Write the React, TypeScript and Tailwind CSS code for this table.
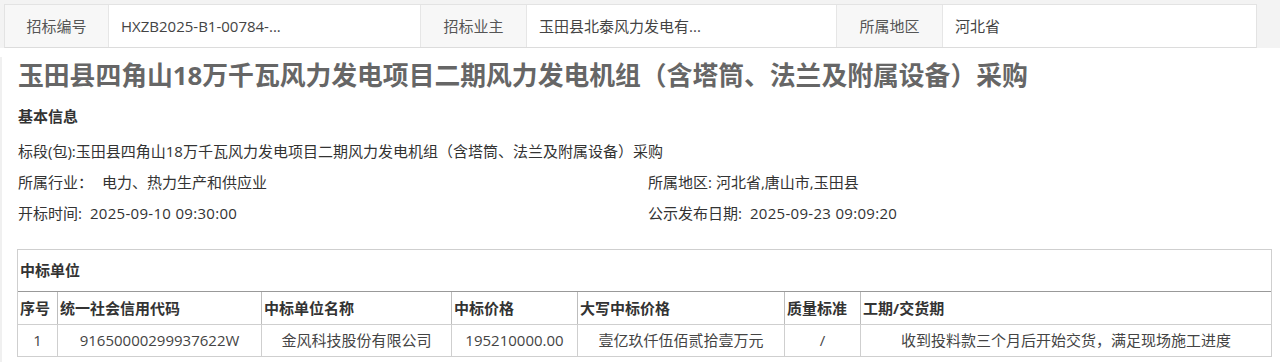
import React from "react";

const font = { fontFamily: '"Open Sans", "Noto Sans CJK SC", sans-serif' };

function TopCell({ label, value, labelW, valueW, last }: { label: string; value: string; labelW: string; valueW: string; last?: boolean }) {
  return (
    <>
      <div className={`${labelW} h-full flex items-center justify-center bg-[#f7f7f7] border-r border-[#e6e6e6] text-[15px] text-[#555]`}>{label}</div>
      <div className={`${valueW} h-full flex items-center pl-[12px] bg-white ${last ? "" : "border-r border-[#e6e6e6]"} text-[15px] text-[#444]`}>{value}</div>
    </>
  );
}

export default function App() {
  const cols = ["w-[40px]", "w-[204px]", "w-[190px]", "w-[126px]", "w-[207px]", "w-[76px]", "flex-1"];
  const heads = ["序号", "统一社会信用代码", "中标单位名称", "中标价格", "大写中标价格", "质量标准", "工期/交货期"];
  const row = ["1", "91650000299937622W", "金风科技股份有限公司", "195210000.00", "壹亿玖仟伍佰贰拾壹万元", "/", "收到投料款三个月后开始交货，满足现场施工进度"];
  return (
    <div className="w-[1280px] h-[362px] bg-white overflow-hidden" style={font}>
      <div className="h-[48px] bg-[#f3f3f3] pl-[4px] pt-[4px]">
        <div className="w-[1253px] h-[44px] flex border border-[#e3e3e3] border-b-[#dcdcdc]">
          <TopCell label="招标编号" value="HXZB2025-B1-00784-..." labelW="w-[104px]" valueW="w-[312px]" />
          <TopCell label="招标业主" value="玉田县北泰风力发电有..." labelW="w-[106px]" valueW="w-[310px]" />
          <TopCell label="所属地区" value="河北省" labelW="w-[106px]" valueW="flex-1" last />
        </div>
      </div>
      <div className="pl-[18px] pr-[8px] border-l-2 border-[#f0f0f0] h-[314px]">
        <div className="mt-[9px] h-[36px] leading-[36px] text-[25.8px] font-bold text-[#666] whitespace-nowrap -ml-[2px]">
          玉田县四角山18万千瓦风力发电项目二期风力发电机组（含塔筒、法兰及附属设备）采购
        </div>
        <div className="mt-[13px] h-[20px] leading-[20px] text-[15px] font-bold text-[#333] -ml-[2px]">基本信息</div>
        <div className="mt-[10px] text-[15px] text-[#333] leading-[31px] -ml-[2px]">
          <div className="h-[31px] whitespace-nowrap">标段(包):玉田县四角山18万千瓦风力发电项目二期风力发电机组（含塔筒、法兰及附属设备）采购</div>
          <div className="h-[31px] grid grid-cols-[630px_1fr]">
            <div>所属行业：<span className="ml-[9px]">电力、热力生产和供应业</span></div>
            <div>所属地区:<span className="ml-[4px]">河北省,唐山市,玉田县</span></div>
          </div>
          <div className="h-[31px] grid grid-cols-[630px_1fr]">
            <div>开标时间:<span className="ml-[8px] tracking-[0.3px]">2025-09-10 09:30:00</span></div>
            <div>公示发布日期:<span className="ml-[8px] tracking-[0.3px]">2025-09-23 09:09:20</span></div>
          </div>
        </div>
        <div className="mt-[20px] -ml-[3px] w-[1255px] border border-[#cfcfcf] text-[15px]">
          <div className="h-[42px] flex items-center pl-[2px] font-bold text-[#333] border-b border-[#999]">中标单位</div>
          <div className="h-[33px] flex border-b border-[#cfcfcf]">
            {heads.map((h, i) => (
              <div key={i} className={`${cols[i]} flex items-center pl-[2px] font-bold text-[#333] ${i < 6 ? "border-r border-[#bdbdbd]" : ""}`}>{h}</div>
            ))}
          </div>
          <div className="h-[31px] flex">
            {row.map((c, i) => (
              <div key={i} className={`${cols[i]} flex items-center justify-center text-[#444] ${i < 6 ? "border-r border-[#cfcfcf]" : ""}`}>{c}</div>
            ))}
          </div>
        </div>
      </div>
    </div>
  );
}
